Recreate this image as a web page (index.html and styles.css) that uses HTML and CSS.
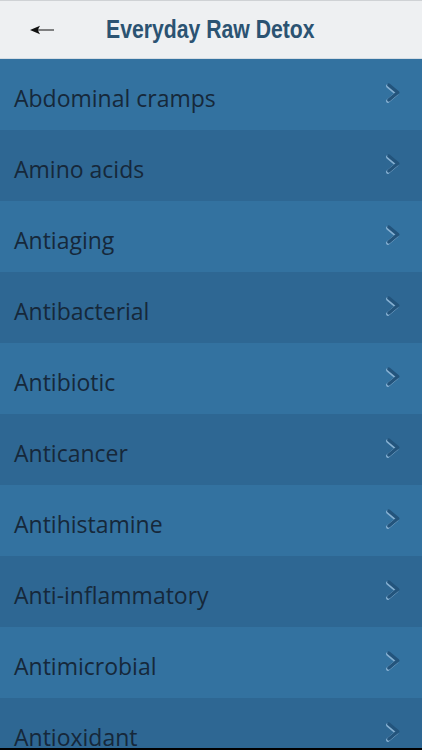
FILE: index.html
```html
<!DOCTYPE html>
<html>
<head>
<meta charset="utf-8">
<link rel="stylesheet" href="styles.css">
</head>
<body>
<div class="screen">
  <header class="topbar">
    <button class="back" aria-label="Back">
      <svg width="24" height="10" viewBox="0 0 24 10"><path d="M0 5 L10 0.8 L8 4.4 L24 4.4 L24 5.6 L8 5.6 L10 9.2 Z" fill="#111"/></svg>
    </button>
    <h1 class="title">Everyday Raw Detox</h1>
  </header>
  <ul class="list">
    <li class="row light"><span>Abdominal cramps</span><svg class="chev" viewBox="0 0 16 22"><polyline class="hl" points="2.8,4 11.8,11.5 2.8,19"/><polyline class="ln" points="3.8,3 12.8,10.5 3.8,18"/></svg></li>
    <li class="row dark"><span>Amino acids</span><svg class="chev" viewBox="0 0 16 22"><polyline class="hl" points="2.8,4 11.8,11.5 2.8,19"/><polyline class="ln" points="3.8,3 12.8,10.5 3.8,18"/></svg></li>
    <li class="row light"><span>Antiaging</span><svg class="chev" viewBox="0 0 16 22"><polyline class="hl" points="2.8,4 11.8,11.5 2.8,19"/><polyline class="ln" points="3.8,3 12.8,10.5 3.8,18"/></svg></li>
    <li class="row dark"><span>Antibacterial</span><svg class="chev" viewBox="0 0 16 22"><polyline class="hl" points="2.8,4 11.8,11.5 2.8,19"/><polyline class="ln" points="3.8,3 12.8,10.5 3.8,18"/></svg></li>
    <li class="row light"><span>Antibiotic</span><svg class="chev" viewBox="0 0 16 22"><polyline class="hl" points="2.8,4 11.8,11.5 2.8,19"/><polyline class="ln" points="3.8,3 12.8,10.5 3.8,18"/></svg></li>
    <li class="row dark"><span>Anticancer</span><svg class="chev" viewBox="0 0 16 22"><polyline class="hl" points="2.8,4 11.8,11.5 2.8,19"/><polyline class="ln" points="3.8,3 12.8,10.5 3.8,18"/></svg></li>
    <li class="row light"><span>Antihistamine</span><svg class="chev" viewBox="0 0 16 22"><polyline class="hl" points="2.8,4 11.8,11.5 2.8,19"/><polyline class="ln" points="3.8,3 12.8,10.5 3.8,18"/></svg></li>
    <li class="row dark"><span>Anti-inflammatory</span><svg class="chev" viewBox="0 0 16 22"><polyline class="hl" points="2.8,4 11.8,11.5 2.8,19"/><polyline class="ln" points="3.8,3 12.8,10.5 3.8,18"/></svg></li>
    <li class="row light"><span>Antimicrobial</span><svg class="chev" viewBox="0 0 16 22"><polyline class="hl" points="2.8,4 11.8,11.5 2.8,19"/><polyline class="ln" points="3.8,3 12.8,10.5 3.8,18"/></svg></li>
    <li class="row dark"><span>Antioxidant</span><svg class="chev" viewBox="0 0 16 22"><polyline class="hl" points="2.8,4 11.8,11.5 2.8,19"/><polyline class="ln" points="3.8,3 12.8,10.5 3.8,18"/></svg></li>
  </ul>
</div>
</body>
</html>
```
FILE: styles.css
```css
html, body {
  margin: 0;
  padding: 0;
  background: #000;
}
.screen {
  width: 422px;
  height: 748px;
  overflow: hidden;
  background: #2e6793;
}
.topbar {
  height: 59px;
  box-sizing: border-box;
  display: flex;
  align-items: center;
  background: #eef0f2;
  border-top: 1px solid #cfd2d5;
  border-bottom: 1px solid #d5dde4;
}
.back {
  border: 0;
  background: none;
  padding: 0;
  margin-left: 30px;
  width: 24px;
  height: 10px;
  display: flex;
  margin-top: 1px;
  flex: none;
}
.title {
  margin: 0 0 0 52px;
  font-family: "Liberation Sans", Arial, sans-serif;
  font-weight: bold;
  font-size: 26.5px;
  color: #2b5372;
  white-space: nowrap;
  transform: scaleX(0.8);
  transform-origin: left center;
}
.list {
  list-style: none;
  margin: 0;
  padding: 0;
}
.row {
  height: 71px;
  display: flex;
  align-items: center;
  justify-content: space-between;
  padding: 0 21px 0 14px;
  font-family: "Open Sans", "Lato", sans-serif;
  font-size: 23px;
  color: #16283a;
}
.row span {
  margin-top: 6px;
}
.light { background: #3372a0; }
.dark { background: #2e6793; }
.chev {
  width: 16px;
  height: 22px;
  margin-top: -3px;
  fill: none;
  stroke-linecap: round;
  stroke-linejoin: round;
}
.chev .hl {
  stroke: #86b0d2;
  stroke-width: 3.6;
}
.chev .ln {
  stroke: #23547c;
  stroke-width: 3.4;
}
```
